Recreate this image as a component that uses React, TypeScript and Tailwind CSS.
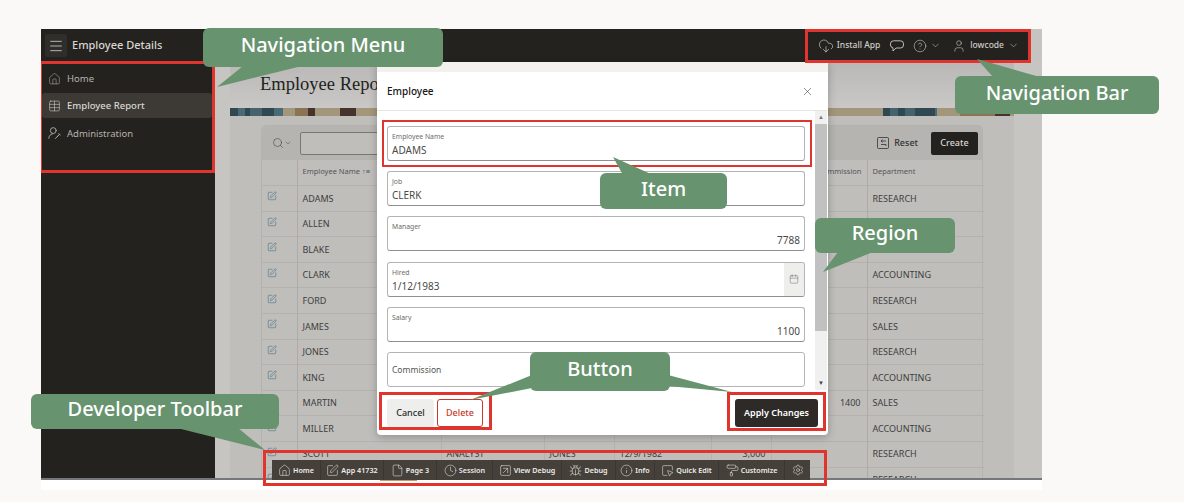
// App.tsx
// Annotated screenshot: Employee Details page with modal dialog and callouts

import {
	Bug,
	Calendar,
	ChevronDown,
	CircleHelp,
	Clock,
	CloudDownload,
	File,
	House,
	Info,
	Menu,
	PaintRoller,
	Search,
	Settings,
	SquareArrowUpRight,
	SquareMousePointer,
	SquarePen,
	Table,
	User,
	X,
} from 'lucide-react'

const FONT = "font-['Noto_Sans','Open_Sans',sans-serif]"

// ── Table data ────────────────────────────────────────────────

const ROWS = [
	['ADAMS', 'CLERK', 'SCOTT', '1/12/1983', '1,100', '', 'RESEARCH'],
	['ALLEN', 'SALESMAN', 'BLAKE', '2/20/1981', '1,600', '300', 'SALES'],
	['BLAKE', 'MANAGER', 'KING', '5/1/1981', '2,850', '', 'SALES'],
	['CLARK', 'MANAGER', 'KING', '6/9/1981', '2,450', '', 'ACCOUNTING'],
	['FORD', 'ANALYST', 'JONES', '12/3/1981', '3,000', '', 'RESEARCH'],
	['JAMES', 'CLERK', 'BLAKE', '12/3/1981', '950', '', 'SALES'],
	['JONES', 'MANAGER', 'KING', '4/2/1981', '2,975', '', 'RESEARCH'],
	['KING', 'PRESIDENT', '', '11/17/1981', '5,000', '', 'ACCOUNTING'],
	['MARTIN', 'SALESMAN', 'BLAKE', '9/28/1981', '1,250', '1400', 'SALES'],
	['MILLER', 'CLERK', 'CLARK', '1/23/1982', '1,300', '', 'ACCOUNTING'],
	['SCOTT', 'ANALYST', 'JONES', '12/9/1982', '3,000', '', 'RESEARCH'],
	['SMITH', 'CLERK', 'FORD', '12/17/1980', '800', '', 'RESEARCH'],
]

const FIELDS = [
	{ label: 'Employee Name', value: 'ADAMS' },
	{ label: 'Job', value: 'CLERK' },
	{ label: 'Manager', value: '7788', right: true },
	{ label: 'Hired', value: '1/12/1983', date: true },
	{ label: 'Salary', value: '1100', right: true },
]

const DEV_ITEMS = [
	{ label: 'Home', Icon: House, width: 'w-[49px]' },
	{ label: 'App 41732', Icon: SquarePen, width: 'w-[63px]' },
	{ label: 'Page 3', Icon: File, width: 'w-[53px]' },
	{ label: 'Session', Icon: Clock, width: 'w-[56px]' },
	{ label: 'View Debug', Icon: SquareArrowUpRight, width: 'w-[69px]' },
	{ label: 'Debug', Icon: Bug, width: 'w-[54px]' },
	{ label: 'Info', Icon: Info, width: 'w-[39px]' },
	{ label: 'Quick Edit', Icon: SquareMousePointer, width: 'w-[64px]' },
	{ label: 'Customize', Icon: PaintRoller, width: 'w-[66px]' },
]

// ── Small parts ───────────────────────────────────────────────

function AdminIcon() {
	return (
		<svg width="14" height="14" viewBox="0 0 16 16" fill="none" stroke="currentColor" strokeWidth="1.1" strokeLinecap="round">
			<circle cx="6.5" cy="5" r="3.6" />
			<path d="M1 14.5c0-3 2-5 4.5-5.4M9 14.8l3.4-3.4M11.2 12.5l3.3-3M13.2 9l1.8 1.4" />
		</svg>
	)
}

function ResetIcon() {
	return (
		<svg width="12" height="12" viewBox="0 0 12 12" fill="none" stroke="#333" strokeWidth="0.8">
			<rect x="0.5" y="0.5" width="11" height="11" rx="1" />
			<path d="M9 4H4M4 4l1.6-1.5M4 4l1.6 1.5M4 7.5h5v1.5" />
		</svg>
	)
}

function ChatIcon() {
	return (
		<svg width="14" height="12" viewBox="0 0 14 12" fill="none" stroke="currentColor" strokeWidth="0.9" strokeLinejoin="round">
			<path d="M3.5 0.8h7a3 3 0 0 1 3 3v1.2a3 3 0 0 1-3 3H6L3 11V7.9A3 3 0 0 1 0.5 5V3.8a3 3 0 0 1 3-3z" />
		</svg>
	)
}

function NavItem({ icon, label, active }: { icon: React.ReactNode; label: string; active?: boolean }) {
	return (
		<div className={`flex items-center gap-[6px] h-[25px] mx-px pl-[6px] rounded-[3px] w-[170px] ${active ? 'bg-[#3d3a36] text-[#d8d6d2] font-medium' : 'text-[#b5b3ae]'}`}>
			<span className="w-[13px] flex justify-center">{icon}</span>
			<span className="text-[9.5px] pt-[2px]">{label}</span>
		</div>
	)
}

function Field({ label, value, right, date }: { label: string; value: string; right?: boolean; date?: boolean }) {
	return (
		<div className="h-[35px] shrink-0 flex border border-[#b4b4b4] border-b-[#8f8f8f] rounded-[3px] bg-white overflow-hidden">
			<div className="flex-1 px-[4px] pt-[5px]">
				<p className="text-[6.8px] leading-[10px] text-[#6b6a67]">{label}</p>
				<p className={`text-[10px] leading-[14px] mt-[1px] text-[#4a4a47] ${right ? 'text-right' : ''}`}>{value}</p>
			</div>
			{date && (
				<div className="w-[20px] bg-[#eeeeec] flex items-center justify-center">
					<Calendar size={10} strokeWidth={1} className="text-[#555]" />
				</div>
			)}
		</div>
	)
}

function Callout({ className, label }: { className: string; label: string }) {
	return (
		<div className={`absolute flex items-center justify-center pb-[5px] rounded-[6px] bg-[#67936f] text-white text-[20px] font-medium ${className}`}>
			{label}
		</div>
	)
}

// ── Page ──────────────────────────────────────────────────────

export default function App() {
	return (
		<div className={`relative w-[1184px] h-[502px] overflow-hidden bg-[#faf9f7] pt-[29px] pl-[41px] ${FONT}`}>
			<div className="w-[1001px] h-[461px] flex flex-col">
				{/* 상단 헤더 */}
				<header className="h-[33px] shrink-0 flex bg-[#c5c4c1]">
					<div className="flex-1 flex items-center bg-[#23221e] pl-[4px] pr-[12px]">
						<div className="w-[22px] h-[23px] rounded-[2px] bg-[#2f2e2a] flex items-center justify-center text-[#d8d6d2]">
							<Menu size={16} strokeWidth={1.2} />
						</div>
						<p className="ml-[5px] text-[11px] font-medium text-[#d8d6d2]">Employee Details</p>
						<div className="ml-auto flex items-center text-[#d0cec9]">
							<CloudDownload size={16} strokeWidth={1} />
							<span className="ml-[3px] text-[8.5px] font-medium">Install App</span>
							<span className="ml-[10px]"><ChatIcon /></span>
							<CircleHelp size={14} strokeWidth={1} className="ml-[9px]" />
							<ChevronDown size={11} strokeWidth={1.2} className="ml-[3px]" />
							<User size={14} strokeWidth={1} className="ml-[11px]" />
							<span className="ml-[4px] text-[8.5px] font-medium">lowcode</span>
							<ChevronDown size={11} strokeWidth={1.2} className="ml-[4px]" />
						</div>
					</div>
					<div className="w-[11px]" />
				</header>

				<div className="h-[418px] shrink-0 flex border-b-2 border-[#75787a] overflow-hidden">
					{/* 사이드 메뉴 */}
					<aside className="w-[174px] shrink-0 bg-[#23221e] pt-[4px]">
						<NavItem icon={<House size={14} strokeWidth={1} />} label="Home" />
						<div className="h-[2px]" />
						<NavItem icon={<Table size={14} strokeWidth={1} />} label="Employee Report" active />
						<div className="h-[2.5px]" />
						<NavItem icon={<AdminIcon />} label="Administration" />
					</aside>

					{/* 본문 */}
					<main className="flex-1 min-w-0 bg-[#c6c5c2] pl-[15px] pr-[28px] flex flex-col">
						<div className="h-[46px] shrink-0 pl-[30px] flex items-center bg-gradient-to-b from-[#b9b8b6] to-[#c9c8c6]">
							<h1 className="font-['Liberation_Serif',serif] text-[18.5px] text-[#1f1f1d]">Employee Report</h1>
						</div>
						<div className="h-[8px] shrink-0 bg-[linear-gradient(90deg,#2f4852_0_8px,#4a6a76_8px_15px,#2f4852_15px_20px,#45636e_20px_32px,#2f4852_32px_44px,#4a6a76_44px_53px,#a2977a_53px_65px,#8a7454_65px_78px,#46342c_78px_85px,#a2977a_85px_110px,#46342c_110px_126px,#a2977a_126px_653px,#2f4852_653px_660px,#45636e_660px_668px,#2f4852_668px_675px,#45636e_675px_685px,#2f4852_685px_705px,#4a6a76_705px_707px,#a2977a_707px_730px,#8a7454_730px_765px,#46342c_765px_780px,#a2977a_780px_784px)]" />
						<div className="flex-1 min-h-0 bg-[#bfbebb] pt-[9px] px-[31px]">
							<div className="border border-[#b3b2af] rounded-t-[5px] w-[722px]">
								{/* 검색 툴바 */}
								<div className="h-[34px] flex items-center bg-[#b5b4b1] pl-[10px] pr-[4px] text-[#333] rounded-t-[5px]">
									<Search size={12} strokeWidth={1} />
									<ChevronDown size={8} strokeWidth={1.2} />
									<div className="ml-[8px] w-[200px] h-[23px] rounded-[2px] border border-[#777] bg-[#bfbebb]" />
									<div className="ml-auto flex items-center">
										<ResetIcon />
										<span className="ml-[5px] text-[9px] font-medium">Reset</span>
										<span className="ml-[13px] w-[47px] h-[23px] rounded-[2px] bg-[#23221e] text-[#d8d6d2] text-[9px] font-medium flex items-center justify-center">Create</span>
									</div>
								</div>
								{/* 리포트 표 */}
								<table className="w-[722px] table-fixed border-collapse text-[9px] text-[#3d3d3b]">
									<colgroup>
										<col className="w-[35px]" />
										<col className="w-[144px]" />
										<col className="w-[103px]" />
										<col className="w-[70px]" />
										<col className="w-[97px]" />
										<col className="w-[60px]" />
										<col className="w-[96px]" />
										<col className="w-[117px]" />
									</colgroup>
									<thead>
										<tr className="h-[25.5px] text-left text-[7.5px] font-normal text-[#555]">
											<th className="border-r border-[#acaba8]" />
											<th className="font-normal pl-[5px] border-r border-[#b3b2af] pb-[2px]">Employee Name ↑≡</th>
											<th className="font-normal pl-[5px] border-r border-[#b3b2af] pb-[2px]">Job</th>
											<th className="font-normal pl-[5px] border-r border-[#b3b2af] pb-[2px]">Manager</th>
											<th className="font-normal pl-[5px] border-r border-[#b3b2af] pb-[2px]">Hired</th>
											<th className="font-normal text-right pr-[5px] border-r border-[#b3b2af] pb-[2px]">Salary</th>
											<th className="font-normal text-right pr-[5px] border-r border-[#acaba8] pb-[2px]">Commission</th>
											<th className="font-normal pl-[5px] pb-[2px]">Department</th>
										</tr>
									</thead>
									<tbody>
										{ROWS.map(row => (
											<tr key={row[0]} className="h-[25.6px] border-t border-[#b3b2af]">
												<td className="border-r border-[#acaba8] pl-[5px] pb-[4px]">
													<SquarePen size={10} strokeWidth={1.2} className="text-[#35617a]" />
												</td>
												<td className="pl-[5px] border-r border-[#b3b2af]">{row[0]}</td>
												<td className="pl-[5px] border-r border-[#b3b2af]">{row[1]}</td>
												<td className="pl-[5px] border-r border-[#b3b2af]">{row[2]}</td>
												<td className="pl-[5px] border-r border-[#b3b2af]">{row[3]}</td>
												<td className="text-right pr-[5px] border-r border-[#b3b2af]">{row[4]}</td>
												<td className="text-right pr-[6px] border-r border-[#acaba8]">{row[5]}</td>
												<td className="pl-[5px]">{row[6]}</td>
											</tr>
										))}
									</tbody>
								</table>
							</div>
						</div>
					</main>
				</div>
				<div className="flex-1 bg-white" />
			</div>

			{/* 모달 */}
			<div className="absolute left-[377px] top-[62px] w-[451px] h-[373px] flex flex-col bg-white rounded-b-[4px] shadow-[0_2px_8px_rgba(0,0,0,0.25)]">
				<div className="h-[10px] shrink-0 bg-[#f2f1ee]" />
				<div className="h-[39px] shrink-0 flex items-center justify-between pl-[10px] pr-[14px] border-b border-[#e6e6e4]">
					<p className="text-[10px] font-medium text-[#161513]">Employee</p>
					<X size={13} strokeWidth={1} className="text-[#333]" />
				</div>
				<div className="flex-1 min-h-0 flex overflow-hidden">
					<div className="flex-1 min-w-0 pl-[10px] pr-[10px] pt-[15px] flex flex-col gap-[10.2px] overflow-hidden">
						{FIELDS.map(f => (
							<Field key={f.label} {...f} />
						))}
						<div className="h-[35px] shrink-0 flex items-center px-[4px] pt-[2px] border border-[#b4b4b4] rounded-[3px] text-[8.5px] text-[#555]">
							Commission
						</div>
					</div>
					<div className="w-[12px] shrink-0 mr-px bg-[#f0f0f0] flex flex-col items-center text-[6px] text-[#777]">
						<span className="h-[13px] leading-[13px]">▲</span>
						<div className="w-full h-[207px] bg-[#c1c1c1]" />
						<span className="mt-auto h-[13px] leading-[13px] text-[#444]">▼</span>
					</div>
				</div>
				<div className="h-[45px] shrink-0 flex items-center px-[10px] text-[9px] font-medium">
					<span className="w-[47px] h-[28px] rounded-[3px] bg-[#eeeeec] text-[#2b2b29] flex items-center justify-center">Cancel</span>
					<span className="ml-[3px] w-[46px] h-[28px] rounded-[3px] border border-[#c93a2b] text-[#c93a2b] flex items-center justify-center">Delete</span>
					<span className="ml-auto w-[83px] h-[28px] rounded-[3px] bg-[#2d2a27] text-white font-semibold flex items-center justify-center">Apply Changes</span>
				</div>
			</div>

			{/* 개발자 툴바 */}
			<div className="absolute left-[272px] top-[460px] w-[538px] h-[20px] flex bg-[#45403a] text-[#eeece8] text-[7.2px] font-semibold">
				{DEV_ITEMS.map(({ label, Icon, width }) => (
					<div key={label} className={`flex items-center justify-center gap-[2px] border-r border-[#3a3631] ${width}`}>
						<Icon size={13} strokeWidth={1} />
						{label}
					</div>
				))}
				<div className="flex-1 flex items-center justify-center">
					<Settings size={12} strokeWidth={1} />
				</div>
			</div>
			<div className="absolute left-[380px] top-[480px] w-[37px] h-[1px] bg-[#c79a64]" />

			{/* 빨간 강조 박스 */}
			<div className="absolute left-[41px] top-[61px] w-[174px] h-[112px] border-[3px] border-l-[1px] border-[#e0352f]" />
			<div className="absolute left-[805px] top-[29px] w-[226px] h-[34px] border-[3px] border-[#e0352f]" />
			<div className="absolute left-[382px] top-[120px] w-[430px] h-[47px] border-2 border-[#e0352f]" />
			<div className="absolute left-[379px] top-[392px] w-[113px] h-[38px] border-[3px] border-[#e0352f]" />
			<div className="absolute left-[727px] top-[392px] w-[99px] h-[39px] border-[3px] border-[#e0352f]" />
			<div className="absolute left-[263px] top-[450px] w-[564px] h-[36px] border-[3px] border-[#e0352f]" />

			{/* 말풍선 꼬리 */}
			<svg className="absolute left-0 top-0" width="1184" height="502" fill="#67936f">
				<polygon points="243,66 302,66 217,87" />
				<polygon points="1040,77 993,77 977,59" />
				<polygon points="613,157 623,175 653,175" />
				<polygon points="838,252 873,252 823,272" />
				<polygon points="532,375 532,388 470,400" />
				<polygon points="668,375 668,386 732,392" />
				<polygon points="177,428 238,428 265,450" />
			</svg>

			{/* 말풍선 */}
			<Callout className="left-[203px] top-[28px] w-[240px] h-[39px]" label="Navigation Menu" />
			<Callout className="left-[955px] top-[76px] w-[204px] h-[38px]" label="Navigation Bar" />
			<Callout className="left-[600px] top-[173px] w-[127px] h-[36px]" label="Item" />
			<Callout className="left-[815px] top-[218px] w-[140px] h-[35px]" label="Region" />
			<Callout className="left-[530px] top-[352px] w-[140px] h-[39px]" label="Button" />
			<Callout className="left-[31px] top-[394px] w-[248px] h-[35px]" label="Developer Toolbar" />
		</div>
	)
}
